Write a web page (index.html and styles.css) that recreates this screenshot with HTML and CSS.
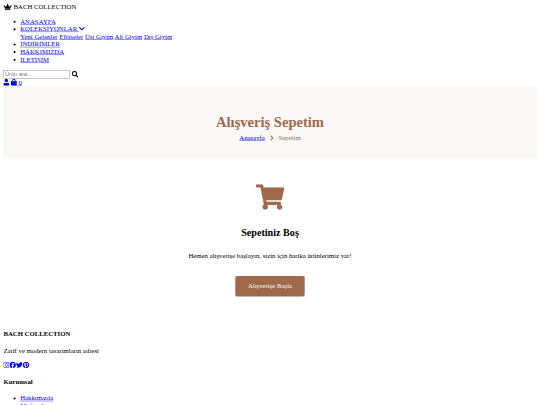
FILE: index.html
```html
<!DOCTYPE html>
<html lang="tr">
    <head>
        <meta charset="UTF-8">
        <meta name="viewport" content="width=device-width, initial-scale=1.0">
        <title>Sepetim - BACH COLLECTION</title>
        <link rel="stylesheet" href="styles.css">
    </head>
    <body>
        <div class="page">
            <header>
                <div class="logo">
                    <svg class="icon" viewBox="0 0 640 512"><path d="M528 448H112c-8.8 0-16 7.2-16 16v32c0 8.8 7.2 16 16 16h416c8.8 0 16-7.2 16-16v-32c0-8.8-7.2-16-16-16zm64-320c-26.5 0-48 21.5-48 48 0 7.1 1.6 13.7 4.4 19.8L476 239.2c-15.4 9.2-35.3 4-44.2-11.6L350.3 85C361 76.2 368 63 368 48c0-26.5-21.5-48-48-48s-48 21.5-48 48c0 15 7 28.2 17.7 37l-81.5 142.6c-8.9 15.6-28.9 20.8-44.2 11.6l-72.3-43.4c2.7-6 4.4-12.7 4.4-19.8 0-26.5-21.5-48-48-48S0 149.5 0 176s21.5 48 48 48c2.6 0 5.2-.4 7.7-.8L128 416h384l72.3-192.8c2.5.4 5.1.8 7.7.8 26.5 0 48-21.5 48-48s-21.5-48-48-48z"/></svg>
                    BACH COLLECTION
                </div>
                <nav>
                    <ul>
                        <li><a href="#">ANASAYFA</a></li>
                        <li>
                            <a href="#">KOLEKSİYONLAR
                                <svg class="icon" viewBox="0 0 448 512"><path d="M207.029 381.476L12.686 187.132c-9.373-9.373-9.373-24.569 0-33.941l22.667-22.667c9.357-9.357 24.522-9.375 33.901-.04L224 284.505l154.745-154.021c9.379-9.335 24.544-9.317 33.901.04l22.667 22.667c9.373 9.373 9.373 24.569 0 33.941L240.971 381.476c-9.373 9.372-24.569 9.372-33.942 0z"/></svg>
                            </a>
                            <div>
                                <a href="#">Yeni Gelenler</a>
                                <a href="#">Elbiseler</a>
                                <a href="#">Üst Giyim</a>
                                <a href="#">Alt Giyim</a>
                                <a href="#">Dış Giyim</a>
                            </div>
                        </li>
                        <li><a href="#">İNDİRİMLER</a></li>
                        <li><a href="#">HAKKIMIZDA</a></li>
                        <li><a href="#">İLETİŞİM</a></li>
                    </ul>
                </nav>
                <div class="search">
                    <input type="text" placeholder="Ürün ara...">
                    <button>
                        <svg class="icon" viewBox="0 0 512 512"><path d="M505 442.7L405.3 343c-4.5-4.5-10.6-7-17-7H372c27.6-35.3 44-79.7 44-128C416 93.1 322.9 0 208 0S0 93.1 0 208s93.1 208 208 208c48.3 0 92.7-16.4 128-44v16.3c0 6.4 2.5 12.5 7 17l99.7 99.7c9.4 9.4 24.6 9.4 33.9 0l28.3-28.3c9.4-9.4 9.4-24.6.1-34zM208 336c-70.7 0-128-57.2-128-128 0-70.7 57.2-128 128-128 70.7 0 128 57.2 128 128 0 70.7-57.2 128-128 128z"/></svg>
                    </button>
                </div>
                <div class="user-links">
                    <a href="#"><svg class="icon" viewBox="0 0 448 512"><path d="M224 256c70.7 0 128-57.3 128-128S294.7 0 224 0 96 57.3 96 128s57.3 128 128 128zm89.6 32h-16.7c-22.2 10.2-46.9 16-72.9 16s-50.6-5.8-72.9-16h-16.7C60.2 288 0 348.2 0 422.4V464c0 26.5 21.5 48 48 48h352c26.5 0 48-21.5 48-48v-41.6c0-74.2-60.2-134.4-134.4-134.4z"/></svg></a>
                    <a href="#"><svg class="icon" viewBox="0 0 448 512"><path d="M352 160v-32C352 57.42 294.579 0 224 0 153.42 0 96 57.42 96 128v32H0v272c0 44.183 35.817 80 80 80h288c44.183 0 80-35.817 80-80V160h-96zm-192-32c0-35.29 28.71-64 64-64s64 28.71 64 64v32H160v-32zm160 120c-13.255 0-24-10.745-24-24s10.745-24 24-24 24 10.745 24 24-10.745 24-24 24zm-192 0c-13.255 0-24-10.745-24-24s10.745-24 24-24 24 10.745 24 24-10.745 24-24 24z"/></svg>
                    <span>0</span></a>
                </div>
            </header>

            <section class="page-hero">
                <h1>Alışveriş Sepetim</h1>
                <div class="breadcrumb">
                    <a href="#">Anasayfa</a>
                    <svg class="icon" viewBox="0 0 320 512"><path d="M285.476 272.971L91.132 467.314c-9.373 9.373-24.569 9.373-33.941 0l-22.667-22.667c-9.357-9.357-9.375-24.522-.04-33.901L188.505 256 34.484 101.255c-9.335-9.379-9.317-24.544.04-33.901l22.667-22.667c9.373-9.373 24.569-9.373 33.941 0L285.475 239.03c9.373 9.372 9.373 24.568.001 33.941z"/></svg>
                    <span>Sepetim</span>
                </div>
            </section>

            <section class="empty-cart">
                <svg class="cart-icon" viewBox="0 0 576 512"><path d="M528.12 301.319l47.273-208C578.806 78.301 567.391 64 551.99 64H159.208l-9.166-44.81C147.758 8.021 137.93 0 126.529 0H24C10.745 0 0 10.745 0 24v16c0 13.255 10.745 24 24 24h69.883l70.248 343.435C147.325 417.1 136 435.222 136 456c0 30.928 25.072 56 56 56s56-25.072 56-56c0-15.674-6.447-29.835-16.824-40h209.647C430.447 426.165 424 440.326 424 456c0 30.928 25.072 56 56 56s56-25.072 56-56c0-22.172-12.888-41.332-31.579-50.405l5.517-24.276c3.413-15.018-8.002-29.319-23.403-29.319H218.117l-6.545-32h293.145c11.206 0 20.92-7.754 23.403-18.681z"/></svg>
                <h2>Sepetiniz Boş</h2>
                <p>Hemen alışverişe başlayın, sizin için harika ürünlerimiz var!</p>
                <a class="btn" href="#">Alışverişe Başla</a>
            </section>

            <footer>
                <h4>BACH COLLECTION</h4>
                <p>Zarif ve modern tasarımların adresi</p>
                <div class="social">
                    <a href="#"><svg class="icon" viewBox="0 0 448 512"><path d="M224.1 141c-63.6 0-114.9 51.3-114.9 114.9s51.3 114.9 114.9 114.9S339 319.5 339 255.9 287.7 141 224.1 141zm0 189.6c-41.1 0-74.7-33.5-74.7-74.7s33.5-74.7 74.7-74.7 74.7 33.5 74.7 74.7-33.6 74.7-74.7 74.7zm146.4-194.3c0 14.9-12 26.8-26.8 26.8-14.9 0-26.8-12-26.8-26.8s12-26.8 26.8-26.8 26.8 12 26.8 26.8zm76.1 27.2c-1.7-35.9-9.9-67.7-36.2-93.9-26.2-26.2-58-34.4-93.9-36.2-37-2.1-147.9-2.1-184.9 0-35.8 1.7-67.6 9.9-93.9 36.1s-34.4 58-36.2 93.9c-2.1 37-2.1 147.9 0 184.9 1.7 35.9 9.9 67.7 36.2 93.9s58 34.4 93.9 36.2c37 2.1 147.9 2.1 184.9 0 35.9-1.7 67.7-9.9 93.9-36.2 26.2-26.2 34.4-58 36.2-93.9 2.1-37 2.1-147.8 0-184.8zM398.8 388c-7.8 19.6-22.9 34.7-42.6 42.6-29.5 11.7-99.5 9-132.1 9s-102.7 2.6-132.1-9c-19.6-7.8-34.7-22.9-42.6-42.6-11.7-29.5-9-99.5-9-132.1s-2.6-102.7 9-132.1c7.8-19.6 22.9-34.7 42.6-42.6 29.5-11.7 99.5-9 132.1-9s102.7-2.6 132.1 9c19.6 7.8 34.7 22.9 42.6 42.6 11.7 29.5 9 99.5 9 132.1s2.7 102.7-9 132.1z"/></svg></a><a href="#"><svg class="icon" viewBox="0 0 512 512"><path d="M504 256C504 119 393 8 256 8S8 119 8 256c0 123.78 90.69 226.38 209.25 245V327.69h-63V256h63v-54.64c0-62.15 37-96.48 93.67-96.48 27.14 0 55.52 4.84 55.52 4.84v61h-31.28c-30.8 0-40.41 19.12-40.41 38.73V256h68.78l-11 71.69h-57.78V501C413.31 482.38 504 379.78 504 256z"/></svg></a><a href="#"><svg class="icon" viewBox="0 0 512 512"><path d="M459.37 151.716c.325 4.548.325 9.097.325 13.645 0 138.72-105.583 298.558-298.558 298.558-59.452 0-114.68-17.219-161.137-47.106 8.447.974 16.568 1.299 25.34 1.299 49.055 0 94.213-16.568 130.274-44.832-46.132-.975-84.792-31.188-98.112-72.772 6.498.974 12.995 1.624 19.818 1.624 9.421 0 18.843-1.3 27.614-3.573-48.081-9.747-84.143-51.98-84.143-102.985v-1.299c13.969 7.797 30.214 12.67 47.431 13.319-28.264-18.843-46.781-51.005-46.781-87.391 0-19.492 5.197-37.36 14.294-52.954 51.655 63.675 129.3 105.258 216.365 109.807-1.624-7.797-2.599-15.918-2.599-24.04 0-57.828 46.782-104.934 104.934-104.934 30.213 0 57.502 12.67 76.67 33.137 23.715-4.548 46.456-13.32 66.599-25.34-7.798 24.366-24.366 44.833-46.132 57.827 21.117-2.273 41.584-8.122 60.426-16.243-14.292 20.791-32.161 39.308-52.628 54.253z"/></svg></a><a href="#"><svg class="icon" viewBox="0 0 496 512"><path d="M496 256c0 137-111 248-248 248-25.6 0-50.2-3.9-73.4-11.1 10.1-16.5 25.2-43.5 30.8-65 3-11.6 15.4-59 15.4-59 8.1 15.4 31.7 28.5 56.8 28.5 74.8 0 128.7-68.8 128.7-154.3 0-81.9-66.9-143.2-152.9-143.2-107 0-163.9 71.8-163.9 150.1 0 36.4 19.4 81.7 50.3 96.1 4.7 2.2 7.2 1.2 8.3-3.3.8-3.4 5-20.3 6.9-28.1.6-2.5.3-4.7-1.7-7.1-10.1-12.5-18.3-35.3-18.3-56.6 0-54.7 41.4-107.6 112-107.6 60.9 0 103.6 41.5 103.6 100.9 0 67.1-33.9 113.6-78 113.6-24.3 0-42.6-20.1-36.7-44.8 7-29.5 20.5-61.3 20.5-82.6 0-19-10.2-34.9-31.4-34.9-24.9 0-44.9 25.7-44.9 60.2 0 22 7.4 36.8 7.4 36.8s-24.5 103.8-29 123.2c-5 21.4-3 51.6-.9 71.2C65.4 450.9 0 361.1 0 256 0 119 111 8 248 8s248 111 248 248z"/></svg></a>
                </div>
                <h4>Kurumsal</h4>
                <ul>
                    <li><a href="#">Hakkımızda</a></li>
                    <li><a href="#">Mağazalarımız</a></li>
                </ul>
            </footer>
        </div>
    </body>
</html>
```

FILE: styles.css
```css
html {
    overflow: hidden;
}
body {
    width: 100vw;
    height: 100vh;
    margin: 0;
    overflow: hidden;
}
.page {
    box-sizing: border-box;
    width: 1280px;
    padding: 8px;
    transform: scale(0.421875);
    transform-origin: 0 0;
    font-family: "Liberation Serif", serif;
    color: #000;
}

.icon {
    height: 16px;
    fill: currentColor;
    vertical-align: -2px;
}

.search {
    display: flex;
    align-items: center;
}
.search button {
    padding: 0 5px;
    border: 0;
    background: none;
    color: #000;
}
.search input {
    width: 149px;
    font-family: "Liberation Sans", sans-serif;
}

.page-hero {
    padding: 64px 0 40px;
    background-color: #faf8f6;
    text-align: center;
}
.page-hero h1 {
    margin: 0 0 8px;
    font-size: 34.5px;
    line-height: 40px;
    color: #a0694b;
}
.breadcrumb {
    display: flex;
    justify-content: center;
    align-items: center;
    gap: 12px;
    line-height: 20px;
    color: #a0694b;
}
.breadcrumb .icon {
    height: 14px;
}

.empty-cart {
    padding: 60px 0;
    text-align: center;
}
.cart-icon {
    display: block;
    width: 68px;
    height: 60px;
    margin: 0 auto 39px;
    fill: #a0694b;
}
.empty-cart h2 {
    margin: 0 0 30px;
    font-size: 24px;
    line-height: 32px;
}
.empty-cart p {
    margin: 0 0 38px;
}
.btn {
    display: inline-block;
    padding: 15px 30px;
    border-radius: 4px;
    background-color: #a0694b;
    color: #f9f7f5;
    text-decoration: none;
    box-shadow: 0 1px 3px rgba(0, 0, 0, 0.2);
}
```
